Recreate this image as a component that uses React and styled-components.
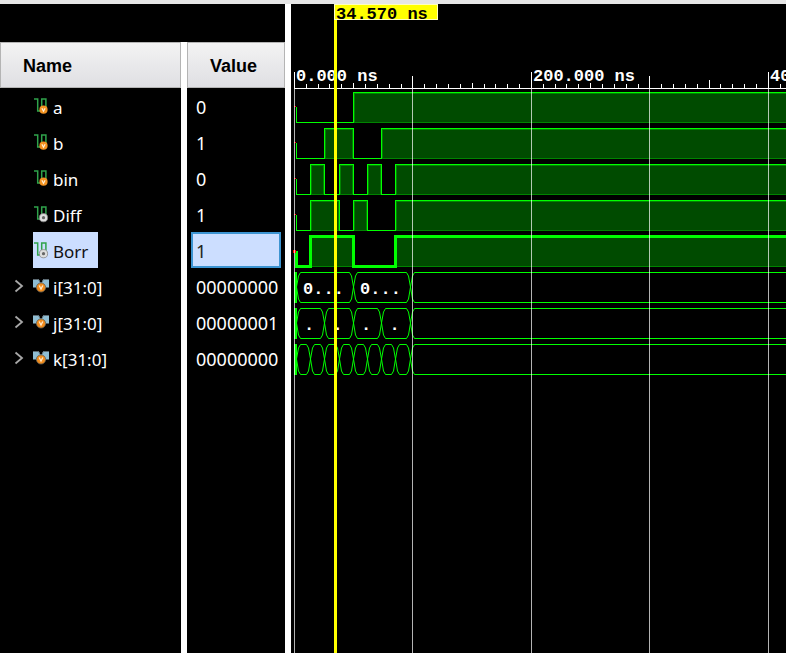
import React, { useLayoutEffect, useRef, useState } from "react";
import styled, { createGlobalStyle } from "styled-components";

const GlobalStyle = createGlobalStyle`
  * { box-sizing: border-box; }
  body { margin: 0; background: #000; }
`;

const Window = styled.main`
  display: flex;
  min-height: 100vh;
  border-top: 4px solid #e6e6e6;
  background: #000;
`;

const SignalPane = styled.section`
  display: flex;
  flex-direction: column;
  flex: none;
  width: 291px;
  padding-top: 38px;
  border-right: 6px solid #fff;
`;

const SignalBody = styled.div`
  flex: 1;
  background: linear-gradient(to right, #000 181px, #fff 181px, #fff 187px, #000 187px);
`;

const SignalTable = styled.table`
  width: 100%;
  table-layout: fixed;
  border-collapse: collapse;
  font-family: "Noto Sans", "Open Sans", sans-serif;
  color: #fff;
`;

const HeadCell = styled.th`
  width: ${(p) => p.$width};
  padding: 0 ${(p) => p.$gap} 0 0;
  text-align: left;
`;

const HeadLabel = styled.div`
  height: 46px;
  padding-left: 22px;
  border: 1px solid #b4b4b4;
  background: linear-gradient(#f3f3f3, #dfdfe3);
  color: #000;
  font: bold 18px/46px "Liberation Sans", Arial, sans-serif;
`;

const NameCell = styled.td`
  padding: 0;
  font-size: 17px;
`;

const NameLine = styled.div`
  display: flex;
  height: 36px;
`;

const ExpandSlot = styled.div`
  display: flex;
  align-items: center;
  width: 33px;
  padding-left: 14px;
`;

const ExpandButton = styled.button`
  display: flex;
  padding: 0;
  border: 0;
  background: none;
  cursor: pointer;
`;

const NameChip = styled.div`
  display: flex;
  align-items: center;
  gap: 4px;
  padding-right: 10px;
  background: ${(p) => (p.$selected ? "#ccdeff" : "none")};
  color: ${(p) => (p.$selected ? "#111" : "#fff")};
`;

const NameText = styled.span`
  padding-top: 2px;
`;

const ValueCell = styled.td`
  padding: 0 4px;
  font-size: 18px;
`;

const ValueBox = styled.div`
  display: flex;
  align-items: center;
  height: 36px;
  padding: 2px 3px 0;
  border: 2px solid ${(p) => (p.$selected ? "#3d94d1" : "transparent")};
  background: ${(p) => (p.$selected ? "#ccdeff" : "none")};
  color: ${(p) => (p.$selected ? "#222" : "#fff")};
`;

const WavePane = styled.section`
  display: flex;
  flex: 1;
  min-width: 0;
`;

const WaveChart = styled.svg`
  flex: 1;
  min-width: 0;
  overflow: hidden;
  font: bold 17px "Liberation Mono", "Courier New", monospace;
`;

const EDGES = [5, 19, 33, 48, 62, 76, 90, 104, 119];
const FAR = 4000;
const ROW = 36;
const FIRST_ROW = 88;
const WAVE_HEIGHT = 30;
const TICK_STEP = 11.85;

const signals = [
  { name: "a", value: "0", kind: "input", bits: "00001111" },
  { name: "b", value: "1", kind: "input", bits: "00110011" },
  { name: "bin", value: "0", kind: "input", bits: "01010101" },
  { name: "Diff", value: "1", kind: "output", bits: "01101001" },
  { name: "Borr", value: "1", kind: "output", bits: "01110001", selected: true },
  { name: "i[31:0]", value: "00000000", kind: "bus", span: 4, label: "0..." },
  { name: "j[31:0]", value: "00000001", kind: "bus", span: 2, label: "." },
  { name: "k[31:0]", value: "00000000", kind: "bus", span: 1, label: "" },
];

function tickTop(i) {
  if (i % 20 === 0) return 68;
  if (i % 10 === 0) return 72;
  if (i === 35) return 76;
  return i % 5 === 0 ? 79 : 80;
}

const tickX = (i) => Math.round(2.9 + i * TICK_STEP);

function SignalIcon({ kind }) {
  if (kind === "bus") {
    return (
      <svg width="16" height="18" viewBox="0 0 16 18" aria-hidden="true">
        <path d="M0 2h5.500L8 6l2.500-4H16v8.500h-3L11 13H5l-2-2.500H0z" fill="#8fbdd3" />
        <path d="M0 2.500h5.500L8 6.500l2.500-4H16" fill="none" stroke="#5c6a72" />
        <path d="M7 2h2v3H7z" fill="#000" />
        <circle cx="8" cy="10.500" r="4.600" fill="#f18b1c" stroke="#5d5c50" strokeWidth=".8" />
        <path d="m6.200 8.500 1.800 3.500 1.800-3.500" fill="none" stroke="#ffe9ca" strokeWidth="1.300" />
      </svg>
    );
  }
  return (
    <svg width="16" height="18" viewBox="0 0 16 18" aria-hidden="true">
      <path d="M1 2h3.700v12h4V2h4.200v9" fill="none" stroke="#2fa34b" strokeWidth="1.500" />
      {kind === "input" ? (
        <>
          <circle cx="10.500" cy="12.700" r="4.100" fill="#f39322" />
          <path d="m8.900 11.200 1.600 3 1.600-3" fill="none" stroke="#fff0d8" strokeWidth="1.200" />
        </>
      ) : (
        <>
          <circle cx="10.500" cy="12.700" r="4.100" fill="#dedede" stroke="#858585" strokeWidth=".8" />
          <circle cx="10.500" cy="12.700" r="1.600" fill="#666" />
        </>
      )}
    </svg>
  );
}

function SignalRow({ signal }) {
  const { name, value, kind, selected } = signal;
  return (
    <tr>
      <NameCell>
        <NameLine>
          <ExpandSlot>
            {kind === "bus" && (
              <ExpandButton aria-label={`Expand ${name}`}>
                <svg width="10" height="14" viewBox="0 0 10 14" aria-hidden="true">
                  <path d="m1.500 1.500 6.500 5.500-6.500 5.500" fill="none" stroke="#a8a8a8" strokeWidth="1.800" />
                </svg>
              </ExpandButton>
            )}
          </ExpandSlot>
          <NameChip $selected={selected}>
            <SignalIcon kind={kind} />
            <NameText>{name}</NameText>
          </NameChip>
        </NameLine>
      </NameCell>
      <ValueCell>
        <ValueBox $selected={selected}>{value}</ValueBox>
      </ValueCell>
    </tr>
  );
}

function BitWave({ bits, top, bold }) {
  const low = top + WAVE_HEIGHT;
  const level = (bit) => (bit === "1" ? top : low) + 0.5;
  const end = (i) => (i === bits.length - 1 ? FAR : EDGES[i + 1]);
  let line = `M5.500 ${top + 15}`;
  bits.split("").forEach((bit, i) => {
    line += `V${level(bit)}H${end(i) + 0.5}`;
  });
  const runs = [];
  bits.split("").forEach((bit, i) => {
    if (bit !== "1") return;
    const last = runs[runs.length - 1];
    if (last && last.end === EDGES[i]) last.end = end(i);
    else runs.push({ start: EDGES[i], end: end(i) });
  });
  return (
    <g shapeRendering="crispEdges">
      {runs.map((run) => (
        <rect
          key={run.start}
          x={run.start + 1.5}
          y={top + 1.5}
          width={run.end - run.start - 2}
          height={WAVE_HEIGHT - 1}
          fill="#004b00"
          stroke="#008400"
        />
      ))}
      <path d={line} fill="none" stroke="#0f0" strokeWidth={bold ? 3 : 1} />
      <rect x={bold ? 2 : 3} y={top + 14} width={bold ? 3 : 2} height={bold ? 3 : 1} fill="#f00" />
    </g>
  );
}

function BusWave({ span, label, top }) {
  const bottom = top + WAVE_HEIGHT;
  const mid = top + WAVE_HEIGHT / 2;
  const cells = EDGES.filter((_, i) => i % span === 0);
  return (
    <g>
      {cells.map((x, i) => {
        const start = x + 0.5;
        const end = (cells[i + 1] ?? FAR) + 0.5;
        const d =
          `M${start} ${mid}L${start + 2} ${top + 4}L${start + 4} ${top + 0.5}H${end - 4}L${end - 2} ${top + 4}L${end} ${mid}` +
          `L${end - 2} ${bottom - 3}L${end - 4} ${bottom + 0.5}H${start + 4}L${start + 2} ${bottom - 3}Z`;
        return <path key={x} d={d} fill="none" stroke="#0f0" />;
      })}
      <rect x="3" y={top} width="3" height={WAVE_HEIGHT + 1} fill="#0f0" />
      {label &&
        cells.slice(0, -1).map((x, i) => {
          const center = (x + cells[i + 1]) / 2;
          return (
            <text key={x} x={center - 1} y={mid + 7} textAnchor="middle" fill="#fff">
              {label}
            </text>
          );
        })}
    </g>
  );
}

function Ruler({ ticks }) {
  return (
    <g shapeRendering="crispEdges">
      {ticks.map((i) => (
        <rect key={i} x={tickX(i)} y={tickTop(i)} width="1" height={84 - tickTop(i)} fill="#fff" />
      ))}
      <rect x="3" y="84" width="100%" height="1" fill="#fff" />
      {ticks
        .filter((i) => i % 20 === 0)
        .map((i) => (
          <text key={i} x={tickX(i) + 2} y="77" fill="#fff">
            {(i * 10).toFixed(3)} ns
          </text>
        ))}
    </g>
  );
}

function GridLines({ ticks }) {
  return (
    <g shapeRendering="crispEdges">
      {ticks
        .filter((i) => i % 10 === 0)
        .map((i) => (
          <rect key={i} x={tickX(i)} y="85" width="1" height="100%" fill="#fff" fillOpacity=".7" />
        ))}
    </g>
  );
}

function Cursor() {
  return (
    <g shapeRendering="crispEdges">
      <rect x="43" y="0" width="3" height="100%" fill="#ff0" />
      <rect x="43.500" y="0.500" width="103" height="15" fill="#ff0" stroke="#ffffc0" />
      <text x="45" y="15" fill="#000">34.570 ns</text>
    </g>
  );
}

function Waveform() {
  const chart = useRef(null);
  const [width, setWidth] = useState(0);

  useLayoutEffect(() => {
    const measure = () => setWidth(chart.current.getBoundingClientRect().width);
    measure();
    const observer = new ResizeObserver(measure);
    observer.observe(chart.current);
    return () => observer.disconnect();
  }, []);

  const ticks = Array.from({ length: Math.ceil(width / TICK_STEP) }, (_, i) => i);

  return (
    <WaveChart ref={chart} role="img" aria-label="Signal waveforms">
      <Ruler ticks={ticks} />
      {signals.map((signal, i) =>
        signal.bits ? (
          <BitWave key={signal.name} bits={signal.bits} top={FIRST_ROW + i * ROW} bold={signal.selected} />
        ) : (
          <BusWave key={signal.name} span={signal.span} label={signal.label} top={FIRST_ROW + i * ROW} />
        )
      )}
      <GridLines ticks={ticks} />
      <Cursor />
    </WaveChart>
  );
}

export default function App() {
  return (
    <>
      <GlobalStyle />
      <Window>
        <SignalPane>
          <SignalBody>
            <SignalTable>
              <thead>
                <tr>
                  <HeadCell $width="187px" $gap="6px" scope="col">
                    <HeadLabel>Name</HeadLabel>
                  </HeadCell>
                  <HeadCell $width="98px" $gap="0" scope="col">
                    <HeadLabel>Value</HeadLabel>
                  </HeadCell>
                </tr>
              </thead>
              <tbody>
                {signals.map((signal) => (
                  <SignalRow key={signal.name} signal={signal} />
                ))}
              </tbody>
            </SignalTable>
          </SignalBody>
        </SignalPane>
        <WavePane>
          <Waveform />
        </WavePane>
      </Window>
    </>
  );
}
